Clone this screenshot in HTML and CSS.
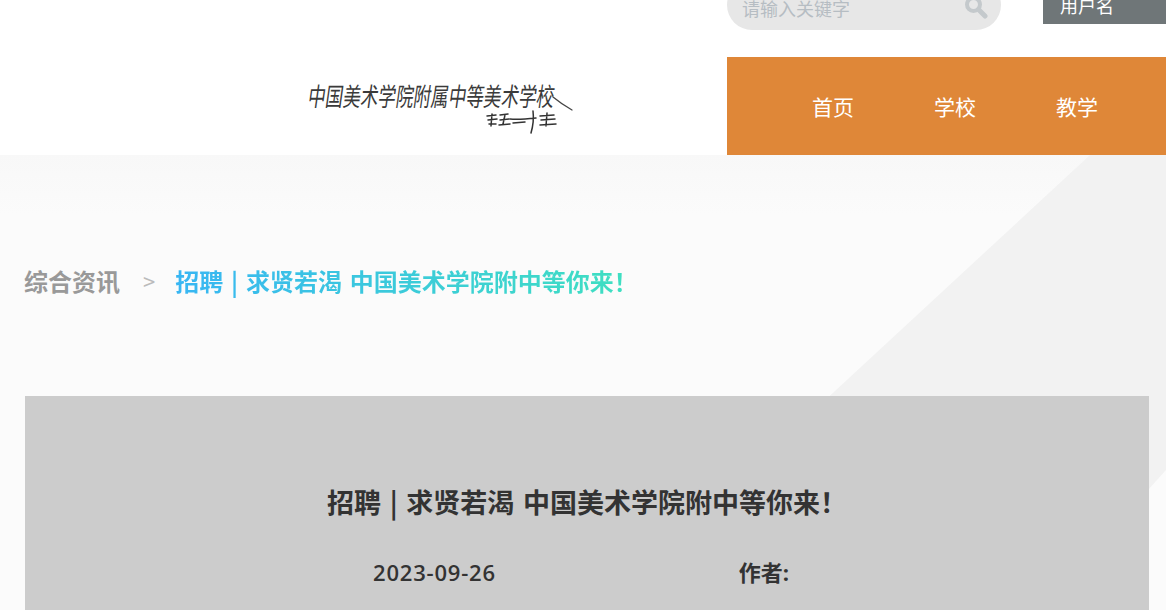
FILE: index.html
```html
<!DOCTYPE html>
<html lang="zh-CN">
<head>
    <meta charset="UTF-8">
    <meta name="viewport" content="width=device-width, initial-scale=1.0">
    <title>招聘 | 求贤若渴 中国美术学院附中等你来！</title>
    <link rel="stylesheet" href="styles.css">
</head>
<body>
    <header class="site-header">
        <div class="top-bar">
            <div class="search-box">
                <span class="search-placeholder">请输入关键字</span>
                <svg class="search-icon" width="24" height="24" viewBox="0 0 24 24" aria-hidden="true">
                    <circle cx="9.5" cy="9.5" r="6.5" fill="none" stroke="#c4c9cc" stroke-width="4"/>
                    <path d="M14.5 14.5 L21 21" stroke="#c4c9cc" stroke-width="5" stroke-linecap="round"/>
                </svg>
            </div>
            <div class="user-box">用户名</div>
        </div>
        <div class="main-bar">
            <a class="logo" href="#">
                <svg width="270" height="60" viewBox="0 0 270 60" role="img" aria-label="中国美术学院附属中等美术学校">
                    <text class="logo-text" transform="translate(4 29) skewX(-8) scale(1 1.45)">中国美术学院附属中等美术学校</text>
                    <path d="M250 20 C256 25 262 29 269 33" fill="none" stroke="#444" stroke-width="1.3" stroke-linecap="round"/>
                    <path d="M207 42 C215 43 224 42 233 41 M230 34 C231 42 230 49 228 56" fill="none" stroke="#333" stroke-width="1.5" stroke-linecap="round"/>
                    <path d="M184 39 L193 38 M185 43 L194 42 M186 47 L193 47 M189 37 L188 49 M197 38 L205 37 M197 43 L206 42 M196 48 L207 47 M202 38 L200 47 M210 46 L222 45 M237 39 L251 38 M238 43 L252 42 M237 48 L253 47 M244 36 L243 49" fill="none" stroke="#333" stroke-width="1.5" stroke-linecap="round"/>
                </svg>
            </a>
            <nav class="main-nav">
                <a href="#">首页</a>
                <a href="#">学校</a>
                <a href="#">教学</a>
            </nav>
        </div>
    </header>

    <main class="page-body">
        <div class="breadcrumb">
            <span class="crumb-parent">综合资讯</span>
            <span class="crumb-sep">&gt;</span>
            <span class="crumb-current">招聘 | 求贤若渴 中国美术学院附中等你来！</span>
        </div>
        <article class="article-panel">
            <h1 class="article-title">招聘 | 求贤若渴 中国美术学院附中等你来！</h1>
            <div class="article-meta">
                <span class="meta-date">2023-09-26</span>
                <span class="meta-author">作者:</span>
            </div>
        </article>
    </main>
</body>
</html>
```

FILE: styles.css
```css
html, body {
    height: 100%;
    overflow: hidden;
}

body {
    margin: 0;
    background-color: #fff;
    font-family: "Open Sans", "Noto Sans CJK SC", sans-serif;
}

a {
    color: inherit;
    text-decoration: none;
}

/* header is scrolled up a little in the reference, so the top row is cut off */
.top-bar {
    display: flex;
    height: 57px;
    padding-left: 727px;
}

.search-box {
    display: flex;
    align-items: center;
    justify-content: space-between;
    box-sizing: border-box;
    width: 274px;
    height: 50px;
    margin-top: -20px;
    padding: 0 13px 0 15px;
    border-radius: 25px;
    background-color: #e7e7e7;
}

.search-placeholder {
    margin-top: 6px;
    font-size: 18px;
    color: #b6bdc3;
}

.search-icon {
    margin-top: 4px;
}

.user-box {
    box-sizing: border-box;
    width: 123px;
    height: 44px;
    margin-top: -20px;
    margin-left: 42px;
    padding-left: 17px;
    background-color: #6f7678;
    color: #fff;
    font-size: 18px;
    line-height: 52px;
}

.main-bar {
    display: flex;
    height: 98px;
}

.logo {
    display: flex;
    align-items: flex-start;
    width: 727px;
    box-sizing: border-box;
    padding: 20px 0 0 303px;
}

.logo-text {
    font-family: "Noto Sans CJK SC", sans-serif;
    font-size: 17.6px;
    font-weight: 400;
    fill: #3a3a3a;
}

.main-nav {
    flex: 1;
    display: flex;
    align-items: center;
    gap: 80px;
    padding-left: 85px;
    background-color: #df8738;
    color: #fff;
    font-size: 21px;
}

.page-body {
    position: relative;
    height: 455px;
    padding: 0 17px 0 25px;
    background: linear-gradient(180deg, #f8f8f8 0, #fbfbfb 60px);
}

/* the big pale triangle behind the article */
.page-body::before {
    content: "";
    position: absolute;
    inset: 0;
    background-color: #f2f2f2;
    clip-path: polygon(1090px 0, 1166px 0, 1166px 315px, 1040px 455px, 600px 455px, 835px 236px);
}

.breadcrumb {
    position: relative;
    display: flex;
    align-items: center;
    height: 56px;
    margin-left: -1px;
    padding-top: 97px;
    font-family: "Noto Sans CJK SC", sans-serif;
    font-size: 24px;
    font-weight: 700;
    word-spacing: 2.4px;
}

.crumb-parent {
    color: #999;
}

.crumb-sep {
    margin: 0 20px 0 23px;
    color: #bbb;
    font-size: 22px;
    font-weight: 400;
}

.crumb-current {
    background-image: linear-gradient(90deg, #38b6f3, #3fe0c0);
    -webkit-background-clip: text;
    background-clip: text;
    color: transparent;
}

.article-panel {
    position: relative;
    height: 214px;
    margin-top: 88px;
    padding-top: 86px;
    box-sizing: border-box;
    background-color: #ccc;
    color: #333;
}

.article-title {
    margin: 0;
    text-align: center;
    font-family: "Noto Sans CJK SC", sans-serif;
    font-size: 27px;
    font-weight: 700;
    line-height: 40px;
    word-spacing: 2.6px;
}

.article-meta {
    display: flex;
    margin-top: 35px;
    padding-left: 348px;
    font-size: 22px;
    font-weight: 600;
    line-height: 30px;
}

.meta-date {
    letter-spacing: 0.8px;
}

.meta-author {
    margin-left: 243px;
    font-weight: 700;
}
```
